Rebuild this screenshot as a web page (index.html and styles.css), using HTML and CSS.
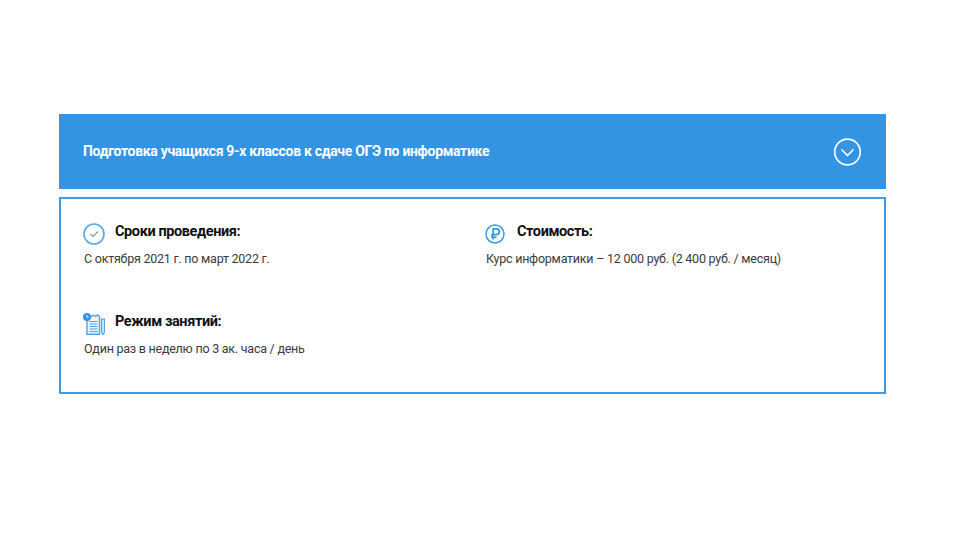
FILE: index.html
```html
<!DOCTYPE html>
<html lang="ru">
<head>
<meta charset="utf-8">
<title>Подготовка к ОГЭ</title>
<link rel="stylesheet" href="styles.css">
</head>
<body>
<main class="accordion">
  <header class="head">
    <h2 class="head-title">Подготовка учащихся 9-х классов к сдаче ОГЭ по информатике</h2>
    <svg class="head-icon" width="27" height="28" viewBox="0 0 27 28" fill="none" stroke="#fff"><circle cx="13.500" cy="14" r="12.800" stroke-width="1.700"/><path d="M8 12l5.500 5.500 5.500-5.500" stroke-width="1.700" stroke-linecap="round" stroke-linejoin="round"/></svg>
  </header>
  <section class="panel">
    <div class="grid">
      <div class="item">
        <div class="item-head">
          <svg class="ico" width="22" height="22" viewBox="0 0 22 22" fill="none" stroke="#54a9ea"><circle cx="11" cy="11" r="10" stroke-width="1.600"/><path d="M7.500 11l2.500 2.500 5-5" stroke-width="1.200" stroke="#6d9fc6"/></svg>
          <h3 class="item-title">Сроки проведения:</h3>
        </div>
        <p class="item-text">С октября 2021 г. по март 2022 г.</p>
      </div>
      <div class="item">
        <div class="item-head item-head-wide">
          <svg class="ico" width="20" height="20" viewBox="0 0 20 20" fill="none" stroke="#3b9ae6"><circle cx="10" cy="10" r="9" stroke-width="1.500"/><path d="M8.200 15.500V4.800h3.100a2.900 2.900 0 0 1 0 5.900H6M6 13.200h5.500" stroke-width="1.800"/></svg>
          <h3 class="item-title">Стоимость:</h3>
        </div>
        <p class="item-text">Курс информатики – 12 000 руб. (2 400 руб. / месяц)</p>
      </div>
      <div class="item">
        <div class="item-head">
          <svg class="ico" width="22" height="22" viewBox="0 0 22 22" fill="none" stroke="#4ba3e8"><path d="M4 3.500l2.200-1.500 2.100 1.500 2.200-1.500 2.100 1.500 2.200-1.500 1.700 1.500V21.300H4z" fill="#eaf5fd" stroke-width="1.400"/><path d="M6.500 8.500h8M6.500 11h8M6.500 13.500h8M6.500 16h8M6.500 18.500h8" stroke-width="1.200"/><path d="M18.500 6h3v13l-1.500 3-1.500-3z" fill="#cfe7fa" stroke-width="1.100"/><circle cx="4" cy="4" r="4" fill="#3394e4" stroke="none"/><path d="M4 2v2.200h1.700" stroke="#fff" stroke-width=".9"/></svg>
          <h3 class="item-title">Режим занятий:</h3>
        </div>
        <p class="item-text">Один раз в неделю по 3 ак. часа / день</p>
      </div>
    </div>
  </section>
</main>
</body>
</html>
```
FILE: styles.css
```css
* { box-sizing: border-box; }
html, body { margin: 0; background: #fff; }
body {
  padding: 114px 74px 0 59px;
  font-family: Roboto, "Noto Sans", sans-serif;
}
.accordion { display: flex; flex-direction: column; gap: 8px; }
.head {
  height: 75px;
  background: #3394e4;
  display: flex;
  align-items: center;
  justify-content: space-between;
  padding: 0 25px 0 24px;
}
.head-title {
  margin: 0 0 1px;
  color: #fff;
  font-size: 14px;
  line-height: 18px;
  font-weight: 700;
  letter-spacing: -.31px;
}
.head-icon { display: block; }
.panel {
  height: 197px;
  border: 2px solid #3f9be6;
  padding: 24px 22px 0;
}
.grid {
  display: grid;
  grid-template-columns: 402px 1fr;
  row-gap: 37px;
}
.item { height: 53px; }
.item-head {
  height: 22px;
  display: flex;
  align-items: center;
  gap: 10px;
}
.item-head-wide { gap: 12px; }
.ico { display: block; flex: none; }
.item-title {
  margin: 0 0 4px;
  color: #111;
  font-size: 14.5px;
  line-height: 18px;
  font-weight: 700;
  letter-spacing: -.4px;
}
.item-text {
  margin: 5px 0 0;
  padding-left: 1px;
  color: #3b3b3b;
  font-size: 12.5px;
  line-height: 18px;
  letter-spacing: -.24px;
}
```
